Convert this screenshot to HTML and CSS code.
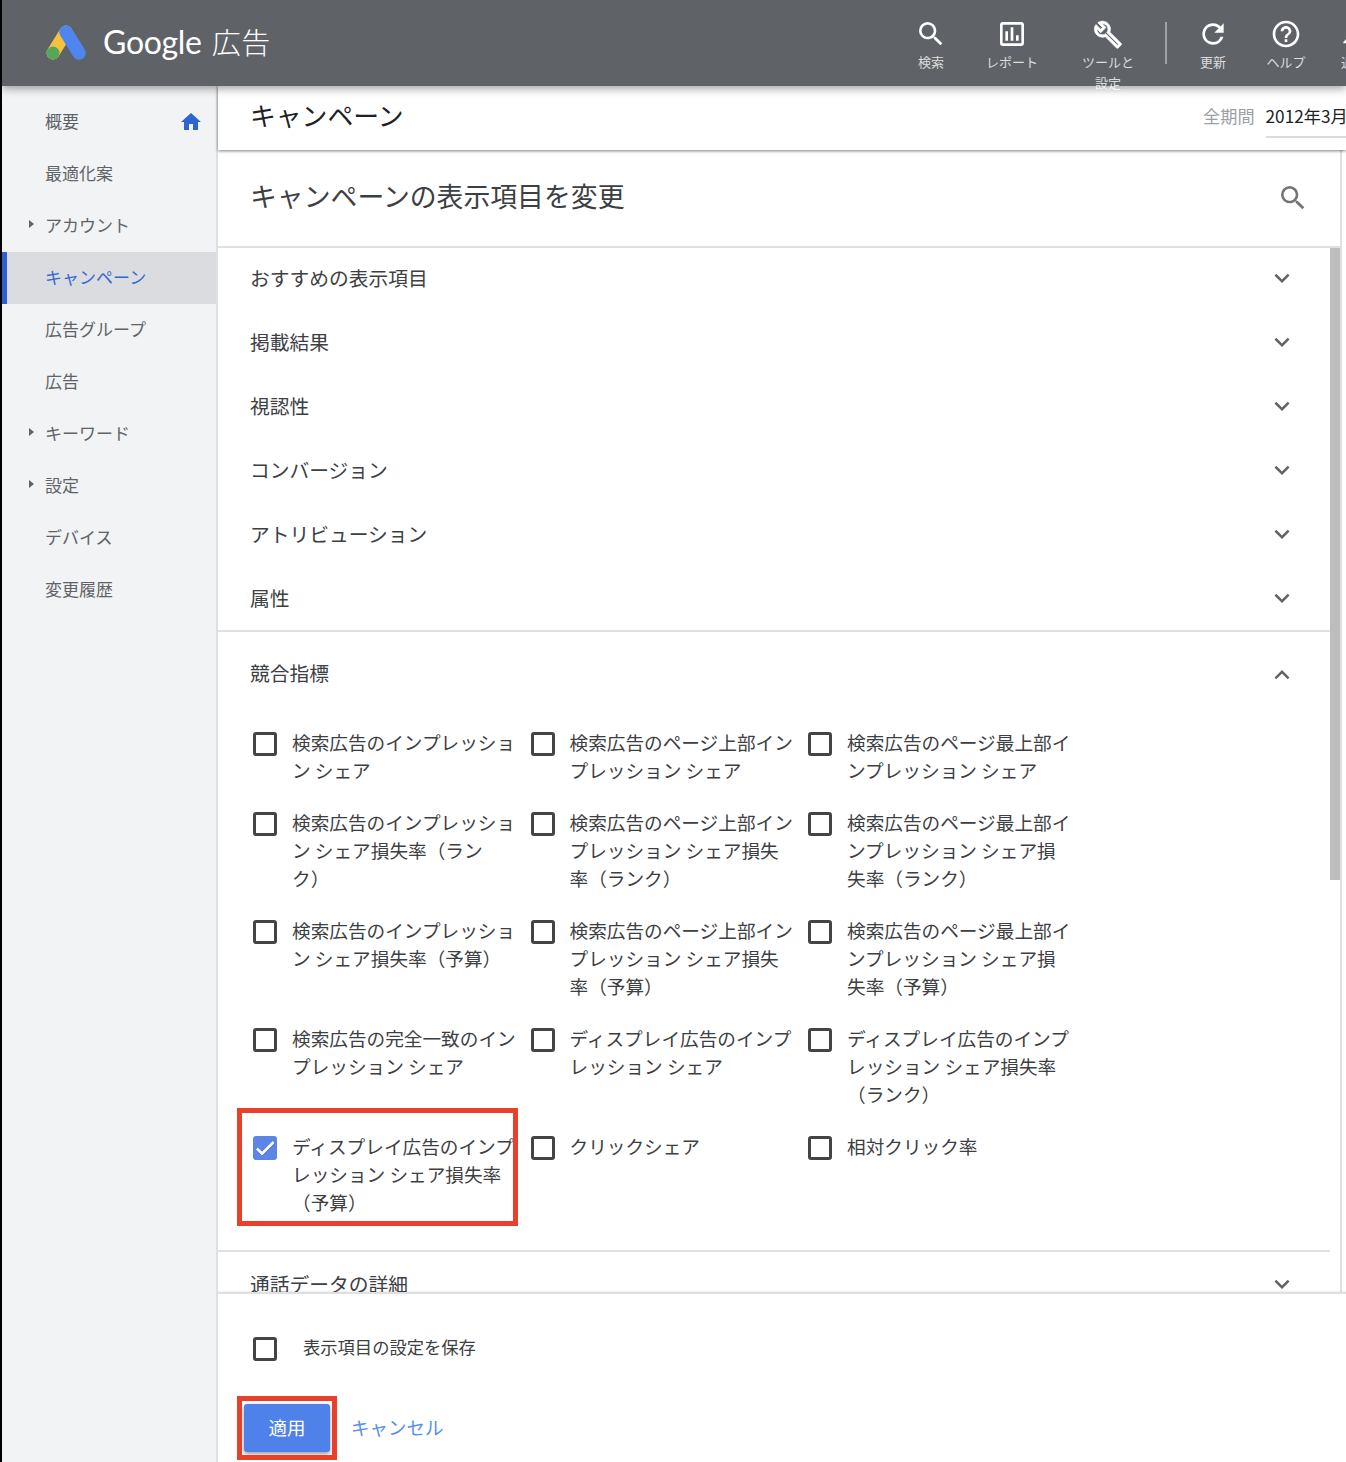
FILE: index.html
```html
<!DOCTYPE html>
<html lang="ja">
<head>
  <meta charset="UTF-8" />
  <title>Google 広告 - キャンペーン</title>
  <link rel="stylesheet" href="styles.css">
</head>
<body>
  <svg class="sprite" width="0" height="0">
    <symbol id="ic-search" viewBox="0 0 24 24"><path d="M15.5 14h-.79l-.28-.27A6.471 6.471 0 0 0 16 9.5 6.5 6.5 0 1 0 9.5 16c1.61 0 3.09-.59 4.23-1.57l.27.28v.79l5 4.99L20.49 19l-4.99-5zm-6 0C7.01 14 5 11.99 5 9.5S7.01 5 9.5 5 14 7.01 14 9.5 11.99 14 9.5 14z"/></symbol>
    <symbol id="ic-down" viewBox="0 0 24 24"><path d="M7.41 8.59L12 13.17l4.59-4.58L18 10l-6 6-6-6z"/></symbol>
    <symbol id="ic-up" viewBox="0 0 24 24"><path d="M7.41 15.41L12 10.83l4.59 4.58L18 14l-6-6-6 6z"/></symbol>
  </svg>

  <div class="app">
    <header class="topbar">
      <div class="brand">
        <svg class="logo" viewBox="0 0 44 42">
          <path d="M22 10L9 31" stroke="#f6c23e" stroke-width="13" stroke-linecap="round"/>
          <path d="M22 10L35 31" stroke="#4f86ee" stroke-width="13.5" stroke-linecap="round"/>
          <circle cx="9" cy="31" r="6.5" fill="#55a85a"/>
        </svg>
        <span class="brand-google">Google</span>
        <span class="brand-ads">広告</span>
      </div>
      <nav class="tools">
        <a class="tool tool-search"><svg class="tool-icon"><use href="#ic-search"/></svg><span>検索</span></a>
        <a class="tool tool-report">
          <svg class="tool-icon" viewBox="0 0 24 24"><path d="M19 3H5c-1.1 0-2 .9-2 2v14c0 1.1.9 2 2 2h14c1.1 0 2-.9 2-2V5c0-1.1-.9-2-2-2zm0 16H5V5h14v14zM7 10h2v7H7zm4-3h2v10h-2zm4 6h2v4h-2z"/></svg>
          <span>レポート</span>
        </a>
        <a class="tool tool-settings">
          <svg class="tool-icon" viewBox="-1 -1.6 26 26"><path d="M22.61 18.99l-9.08-9.08c.93-2.34.45-5.1-1.44-7C9.79.61 6.21.4 3.66 2.25L7.5 6.1 6.08 7.5 2.25 3.67C.4 6.21.61 9.79 2.91 12.09c1.86 1.86 4.57 2.35 6.89 1.48l9.11 9.11c.39.39 1.02.39 1.41 0l2.3-2.3c.4-.38.4-1.01-.01-1.39zm-3 1.6l-9.46-9.46c-.61.45-1.29.72-2 .82-1.36.2-2.79-.21-3.83-1.25C3.37 9.76 2.93 8.5 3 7.26l3.09 3.09 4.24-4.24-3.09-3.09c1.24-.07 2.49.37 3.44 1.31 1.08 1.08 1.49 2.57 1.24 3.96-.12.71-.42 1.37-.88 1.96l9.45 9.45-.88.88z"/></svg>
          <span>ツールと設定</span>
        </a>
        <div class="tools-divider"></div>
        <a class="tool tool-refresh">
          <svg class="tool-icon" viewBox="0 0 24 24"><path d="M17.65 6.35A7.958 7.958 0 0 0 12 4c-4.42 0-7.99 3.58-7.99 8s3.57 8 7.99 8c3.73 0 6.84-2.55 7.73-6h-2.08A5.99 5.99 0 0 1 12 18c-3.31 0-6-2.69-6-6s2.69-6 6-6c1.66 0 3.14.69 4.22 1.78L13 11h7V4l-2.35 2.35z"/></svg>
          <span>更新</span>
        </a>
        <a class="tool tool-help">
          <svg class="tool-icon" viewBox="0 0 24 24"><path d="M11 18h2v-2h-2v2zm1-16C6.48 2 2 6.48 2 12s4.48 10 10 10 10-4.48 10-10S17.52 2 12 2zm0 18c-4.41 0-8-3.59-8-8s3.59-8 8-8 8 3.59 8 8-3.59 8-8 8zm0-14c-2.21 0-4 1.79-4 4h2c0-1.1.9-2 2-2s2 .9 2 2c0 2-3 1.75-3 5h2c0-2.25 3-2.5 3-5 0-2.21-1.79-4-4-4z"/></svg>
          <span>ヘルプ</span>
        </a>
        <a class="tool tool-notify">
          <svg class="tool-icon" viewBox="0 0 24 24"><path d="M12 22c1.1 0 2-.9 2-2h-4c0 1.1.9 2 2 2zm6-6v-5c0-3.07-1.63-5.64-4.5-6.32V4c0-.83-.67-1.5-1.5-1.5s-1.5.67-1.5 1.5v.68C7.64 5.36 6 7.92 6 11v5l-2 2v1h16v-1l-2-2zm-2 1H8v-6c0-2.48 1.51-4.5 4-4.5s4 2.02 4 4.5v6z"/></svg>
          <span>通知</span>
        </a>
      </nav>
    </header>

    <div class="layout">
      <aside class="sidebar">
        <a class="side-item">概要<svg class="home" viewBox="0 0 24 24"><path d="M10 20v-6h4v6h5v-8h3L12 3 2 12h3v8z"/></svg></a>
        <a class="side-item">最適化案</a>
        <a class="side-item has-children">アカウント</a>
        <a class="side-item active">キャンペーン</a>
        <a class="side-item">広告グループ</a>
        <a class="side-item">広告</a>
        <a class="side-item has-children">キーワード</a>
        <a class="side-item has-children">設定</a>
        <a class="side-item">デバイス</a>
        <a class="side-item">変更履歴</a>
      </aside>

      <main class="content">
        <div class="titlebar">
          <h1>キャンペーン</h1>
          <div class="period">
            <span class="period-label">全期間</span>
            <span class="period-value">2012年3月1日</span>
          </div>
        </div>

        <div class="editor">
          <div class="editor-head">
            <h2>キャンペーンの表示項目を変更</h2>
            <svg class="editor-search"><use href="#ic-search"/></svg>
          </div>

          <div class="sections">
            <div class="scrollbar"></div>

            <div class="section-group">
              <div class="section-row">おすすめの表示項目<svg class="chev"><use href="#ic-down"/></svg></div>
              <div class="section-row">掲載結果<svg class="chev"><use href="#ic-down"/></svg></div>
              <div class="section-row">視認性<svg class="chev"><use href="#ic-down"/></svg></div>
              <div class="section-row">コンバージョン<svg class="chev"><use href="#ic-down"/></svg></div>
              <div class="section-row">アトリビューション<svg class="chev"><use href="#ic-down"/></svg></div>
              <div class="section-row">属性<svg class="chev"><use href="#ic-down"/></svg></div>
            </div>

            <div class="section-group">
              <div class="section-row open">競合指標<svg class="chev"><use href="#ic-up"/></svg></div>
              <div class="metrics">
                <label class="metric"><span class="box"></span><span>検索広告のインプレッション シェア</span></label>
                <label class="metric"><span class="box"></span><span>検索広告のページ上部インプレッション シェア</span></label>
                <label class="metric"><span class="box"></span><span>検索広告のページ最上部インプレッション シェア</span></label>
                <label class="metric"><span class="box"></span><span>検索広告のインプレッション シェア損失率（ランク）</span></label>
                <label class="metric"><span class="box"></span><span>検索広告のページ上部インプレッション シェア損失率（ランク）</span></label>
                <label class="metric"><span class="box"></span><span>検索広告のページ最上部インプレッション シェア損失率（ランク）</span></label>
                <label class="metric"><span class="box"></span><span>検索広告のインプレッション シェア損失率（予算）</span></label>
                <label class="metric"><span class="box"></span><span>検索広告のページ上部インプレッション シェア損失率（予算）</span></label>
                <label class="metric"><span class="box"></span><span>検索広告のページ最上部インプレッション シェア損失率（予算）</span></label>
                <label class="metric"><span class="box"></span><span>検索広告の完全一致のインプレッション シェア</span></label>
                <label class="metric"><span class="box"></span><span>ディスプレイ広告のインプレッション シェア</span></label>
                <label class="metric"><span class="box"></span><span>ディスプレイ広告のインプレッション シェア損失率（ランク）</span></label>
                <label class="metric highlighted">
                  <span class="box checked"><svg viewBox="0 0 24 24"><path d="M9 16.2L4.8 12l-1.4 1.4L9 19 21 7l-1.4-1.4z"/></svg></span>
                  <span>ディスプレイ広告のインプレッション シェア損失率（予算）</span>
                </label>
                <label class="metric"><span class="box"></span><span>クリックシェア</span></label>
                <label class="metric"><span class="box"></span><span>相対クリック率</span></label>
              </div>
            </div>

            <div class="section-group">
              <div class="section-row">通話データの詳細<svg class="chev"><use href="#ic-down"/></svg></div>
            </div>
          </div>
        </div>

        <div class="editor-foot">
          <label class="save-row"><span class="box"></span><span class="save-label">表示項目の設定を保存</span></label>
          <div class="actions">
            <button class="btn-apply">適用</button>
            <a class="btn-cancel">キャンセル</a>
          </div>
        </div>
      </main>
    </div>
  </div>
</body>
</html>
```

FILE: styles.css
```css
*, *::before, *::after { margin: 0; padding: 0; box-sizing: border-box; }

body {
  background: #000;
  overflow: hidden;
  height: 1462px;
  font-family: "Noto Sans CJK JP", "Noto Sans", sans-serif;
  color: #3c4043;
}

.sprite { position: absolute; }

.app {
  margin-left: 2px;
  height: 1462px;
  display: flex;
  flex-direction: column;
  background: #fff;
}

/* Barra superior */
.topbar {
  height: 86px;
  flex-shrink: 0;
  display: flex;
  background: #5f6368;
  color: #fff;
  box-shadow: 0 3px 8px rgba(0, 0, 0, 0.35);
  position: relative;
  z-index: 5;
}

.brand {
  width: 889px;
  flex-shrink: 0;
  display: flex;
  align-items: center;
  padding: 0 0 4px 42px;
}

.logo { width: 44px; height: 42px; margin: 0 15px -4px 0; }

.brand-google {
  font-family: "Lato", sans-serif;
  font-size: 32px;
  letter-spacing: -0.3px;
  margin-right: 10px;
}

.brand-ads {
  font-size: 29px;
  font-weight: 300;
  letter-spacing: 0.5px;
}

.tools { display: flex; flex-shrink: 0; }

.tool {
  flex-shrink: 0;
  width: 80px;
  padding-top: 18px;
  display: flex;
  flex-direction: column;
  align-items: center;
  text-align: center;
  font-size: 13px;
  line-height: 21px;
  color: rgba(255, 255, 255, 0.78);
}

.tool-icon {
  width: 32px;
  height: 32px;
  flex-shrink: 0;
  fill: #fff;
  margin-bottom: 1px;
}

.tool-report { margin-left: 1px; }
.tool-settings { width: 56px; margin-left: 28px; }
.tool-settings .tool-icon { stroke: #fff; stroke-width: 0.6; }
.tool-refresh { width: 60px; margin-left: 16px; }
.tool-help { margin-left: 3px; }
.tool-notify { width: 56px; }

.tools-divider {
  width: 2px;
  height: 42px;
  margin: 22px 0 0 29px;
  background: rgba(255, 255, 255, 0.4);
}

/* Layout */
.layout { flex: 1; display: flex; min-height: 0; }

.sidebar {
  width: 216px;
  flex-shrink: 0;
  padding-top: 10px;
  background: #f1f3f4;
  border-right: 2px solid #e0e0e0;
}

.side-item {
  height: 52px;
  display: flex;
  align-items: center;
  justify-content: space-between;
  padding: 0 13px 4px 43px;
  font-size: 17px;
  color: #5f6368;
  position: relative;
}

.side-item.has-children::before {
  content: '';
  position: absolute;
  left: 27px;
  top: 20px;
  border-left: 5px solid #5f6368;
  border-top: 4.5px solid transparent;
  border-bottom: 4.5px solid transparent;
}

.side-item.active {
  background: #dadce0;
  color: #3367d6;
  border-left: 5px solid #2f5fd0;
  padding-left: 38px;
}

.home { width: 24px; height: 24px; fill: #2f65d3; margin-bottom: -4px; }

.content {
  flex: 1;
  min-width: 0;
  display: flex;
  flex-direction: column;
}

.titlebar {
  height: 64px;
  flex-shrink: 0;
  display: flex;
  justify-content: space-between;
  padding: 7px 0 0 32px;
  box-shadow: 0 1px 3px rgba(0, 0, 0, 0.5);
  position: relative;
  z-index: 2;
  overflow: hidden;
}

.titlebar h1 {
  font-size: 25.8px;
  font-weight: 400;
  line-height: 44px;
  color: #202124;
}

.period {
  width: 143px;
  flex-shrink: 0;
  display: flex;
  gap: 11px;
  padding-top: 1px;
  font-size: 17.2px;
  line-height: 44px;
  white-space: nowrap;
}

.period-label { color: #9aa0a6; }

.period-value {
  color: #202124;
  height: 44px;
  border-bottom: 2px solid #dadce0;
}

/* Editor de colunas */
.editor {
  flex: 1;
  min-height: 0;
  width: 1124px;
  display: flex;
  flex-direction: column;
  border-right: 2px solid #e0e0e0;
}

.editor-head {
  height: 98px;
  flex-shrink: 0;
  display: flex;
  justify-content: space-between;
  align-items: center;
  padding: 0 32px 5px;
  border-bottom: 2px solid #e0e0e0;
  background: #fff;
  position: relative;
  z-index: 1;
}

.editor-head h2 {
  font-size: 26.85px;
  font-weight: 400;
  color: #3c4043;
}

.editor-search { width: 32px; height: 32px; fill: #757575; margin: 0 -1px -5px 0; }

.sections {
  flex: 1;
  min-height: 0;
  overflow: hidden;
  position: relative;
  margin-top: -2px;
  padding-right: 10px;
}

.scrollbar {
  position: absolute;
  right: 0;
  top: 2px;
  width: 10px;
  height: 632px;
  background: #bdbdbd;
}

.section-group { border-bottom: 2px solid #e0e0e0; }
.section-group:last-child { border-bottom: 0; }

.section-row {
  height: 64px;
  display: flex;
  justify-content: space-between;
  align-items: center;
  padding: 0 32px 2px;
  font-size: 19.75px;
}

.section-row.open { height: 86px; padding-bottom: 6px; }

.chev { width: 30px; height: 30px; fill: #5f6368; margin: 0 1px -2px 0; }
.section-row.open .chev { margin-bottom: -6px; }

.metrics {
  display: grid;
  grid-template-columns: repeat(3, 277.5px);
  row-gap: 24px;
  padding: 10px 0 34px 35px;
}

.metric {
  display: flex;
  gap: 15px;
  font-size: 18.65px;
  line-height: 28px;
  text-spacing-trim: space-all;
  position: relative;
}

.metric > span:last-child { width: 224.5px; }

.box {
  width: 24px;
  height: 24px;
  flex-shrink: 0;
  margin-top: 4px;
  border: 3px solid #444;
  border-radius: 3px;
}

.box.checked {
  background: #5b86e5;
  border-color: #5b86e5;
}

.box.checked svg {
  display: block;
  width: 24px;
  height: 24px;
  margin: -3px;
  fill: #fff;
  stroke: #fff;
  stroke-width: 0.8;
}

/* caixa vermelha de destaque */
.highlighted::after {
  content: '';
  position: absolute;
  left: -16px;
  top: -24px;
  width: 281px;
  height: 118px;
  border: 5px solid #e8402a;
}

/* Rodapé */
.editor-foot {
  height: 170px;
  flex-shrink: 0;
  padding: 39px 0 0 35px;
  border-top: 2px solid #e0e0e0;
  box-shadow: 0 -1px 1px rgba(0, 0, 0, 0.05);
  background: #fff;
  position: relative;
  z-index: 1;
}

.save-row {
  display: flex;
  align-items: center;
  gap: 26px;
  font-size: 17.3px;
  line-height: 28px;
}

.save-row .box { margin-top: 0; }

.save-label { padding-bottom: 3px; }

.actions {
  display: flex;
  align-items: center;
  gap: 21px;
  margin: 40px 0 0 -9px;
  position: relative;
}

.actions::before {
  content: '';
  position: absolute;
  left: -7px;
  top: -8px;
  width: 100px;
  height: 64px;
  border: 5px solid #e8402a;
}

.btn-apply {
  width: 86px;
  height: 48px;
  padding-bottom: 3px;
  border: 0;
  border-radius: 3px;
  background: #4f81ea;
  color: #fff;
  font-family: inherit;
  font-size: 18.5px;
  box-shadow: 0 2px 4px rgba(0, 0, 0, 0.4);
}

.btn-cancel {
  font-size: 18.5px;
  color: #5a8ff0;
  padding-bottom: 3px;
}
```
